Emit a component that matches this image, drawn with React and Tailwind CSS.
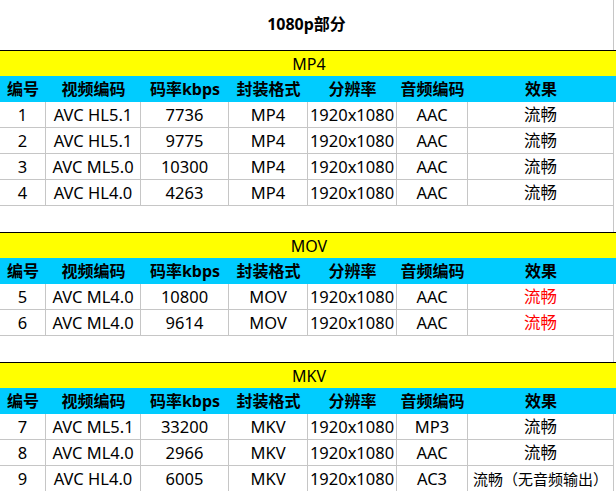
const cols = ['编号', '视频编码', '码率kbps', '封装格式', '分辨率', '音频编码', '效果'];

const sections = [
  {
    name: 'MP4',
    rows: [
      ['1', 'AVC HL5.1', '7736', 'MP4', '1920x1080', 'AAC', '流畅'],
      ['2', 'AVC HL5.1', '9775', 'MP4', '1920x1080', 'AAC', '流畅'],
      ['3', 'AVC ML5.0', '10300', 'MP4', '1920x1080', 'AAC', '流畅'],
      ['4', 'AVC HL4.0', '4263', 'MP4', '1920x1080', 'AAC', '流畅'],
    ],
  },
  {
    name: 'MOV',
    red: true,
    rows: [
      ['5', 'AVC ML4.0', '10800', 'MOV', '1920x1080', 'AAC', '流畅'],
      ['6', 'AVC ML4.0', '9614', 'MOV', '1920x1080', 'AAC', '流畅'],
    ],
  },
  {
    name: 'MKV',
    rows: [
      ['7', 'AVC ML5.1', '33200', 'MKV', '1920x1080', 'MP3', '流畅'],
      ['8', 'AVC ML4.0', '2966', 'MKV', '1920x1080', 'AAC', '流畅'],
      ['9', 'AVC HL4.0', '6005', 'MKV', '1920x1080', 'AC3', '流畅（无音频输出）'],
    ],
  },
];

const grid = 'grid grid-cols-[46px_95px_88px_79px_89px_71px_146px]';

function Section({ name, rows, red, last }) {
  return (
    <div>
      <div className="h-[26px] border-t border-black bg-[#ffff00] flex items-center justify-center w-[616px]">
        <span className="pl-[2px]">{name}</span>
      </div>
      <div className="h-[26px] bg-[#00ccff] w-[616px]">
        <div className={grid + ' h-full font-bold'}>
          {cols.map((c) => (
            <div key={c} className="flex items-center justify-center whitespace-nowrap">
              {c}
            </div>
          ))}
        </div>
      </div>
      {rows.map((r) => (
        <div key={r[0]} className={grid + ' h-[26px]'}>
          {r.map((v, i) => (
            <div
              key={i}
              className={
                'flex items-center justify-center whitespace-nowrap border-r border-b border-[#c6c6c6] pt-[1px] ' +
                (v.length > 4 && i === 6 ? 'text-[15px] ' : 'text-[16.5px] ') +
                (i === 6 && red ? 'text-[#ff0000]' : '')
              }
            >
              {v}
            </div>
          ))}
        </div>
      ))}
      {!last && <div className="h-[26px] w-[614px] border-r border-[#c6c6c6]" />}
    </div>
  );
}

export default function App() {
  return (
    <div className="w-[616px] h-[491px] overflow-hidden bg-white text-black text-[16px] leading-none font-['Noto_Sans','Noto_Sans_CJK_SC',sans-serif]">
      <div className="h-[50px] w-[614px] border-r border-[#c6c6c6] flex items-center justify-center font-bold pb-[2px]">
        1080p部分
      </div>
      {sections.map((s, i) => (
        <Section key={s.name} {...s} last={i === sections.length - 1} />
      ))}
    </div>
  );
}
